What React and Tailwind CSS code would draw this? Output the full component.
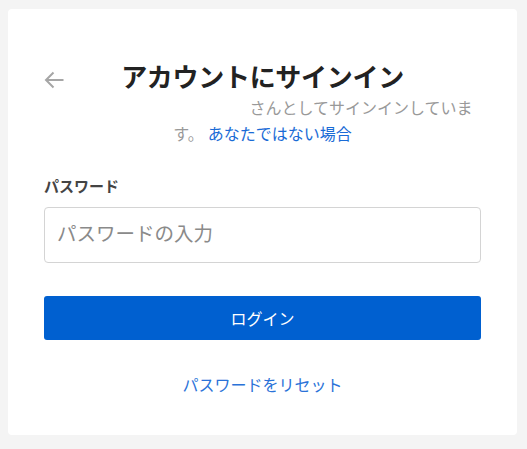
export default function App() {
  const font = { fontFamily: '"Noto Sans CJK JP", "Noto Sans", sans-serif' };
  return (
    <div
      className="w-[527px] h-[449px] bg-[#f4f4f4] pt-[9px] pl-[8px] pr-[10px]"
      style={font}
    >
      <div className="bg-white rounded-[4px] h-[426px] px-[36px] pt-[51px]">
        <div className="grid grid-cols-[28px_1fr_28px] items-center">
          <div className="pt-[8px]">
            <svg width="20" height="18" viewBox="0 0 20 18" fill="none">
              <path
                d="M19.5 9H2M9.5 1.5L2 9l7.5 7.5"
                stroke="#a6a6a6"
                strokeWidth="2"
                strokeLinecap="butt"
                strokeLinejoin="miter"
              />
            </svg>
          </div>
          <h1 className="text-center text-[26px] leading-[32px] font-bold text-[#222] tracking-[-0.3px]">
            アカウントにサインイン
          </h1>
          <div />
        </div>
        <div className="mt-[2px] text-[16px] leading-[26px] text-[#999] text-center">
          <div>
            <span className="inline-block w-[197px] align-middle" />
            さんとしてサインインしていま
          </div>
          <div>
            す。<a className="ml-[4px] text-[#1a6bd6]">あなたではない場合</a>
          </div>
        </div>
        <label className="block mt-[30px] text-[15px] leading-[20px] font-bold text-[#444]">
          パスワード
        </label>
        <input
          type="password"
          placeholder="パスワードの入力"
          className="mt-[11px] block w-full h-[56px] border border-[#d4d4d4] rounded-[4px] px-[12px] pb-[5px] text-[19.5px] placeholder:text-[#8a8a8a] outline-none"
          style={font}
        />
        <button
          className="mt-[33px] block w-full h-[44px] rounded-[3px] bg-[#0060d0] text-white text-[16px]"
          style={font}
        >
          ログイン
        </button>
        <div className="mt-[32px] text-center text-[16px] leading-[24px]">
          <a className="text-[#2a72d8]">パスワードをリセット</a>
        </div>
      </div>
    </div>
  );
}
